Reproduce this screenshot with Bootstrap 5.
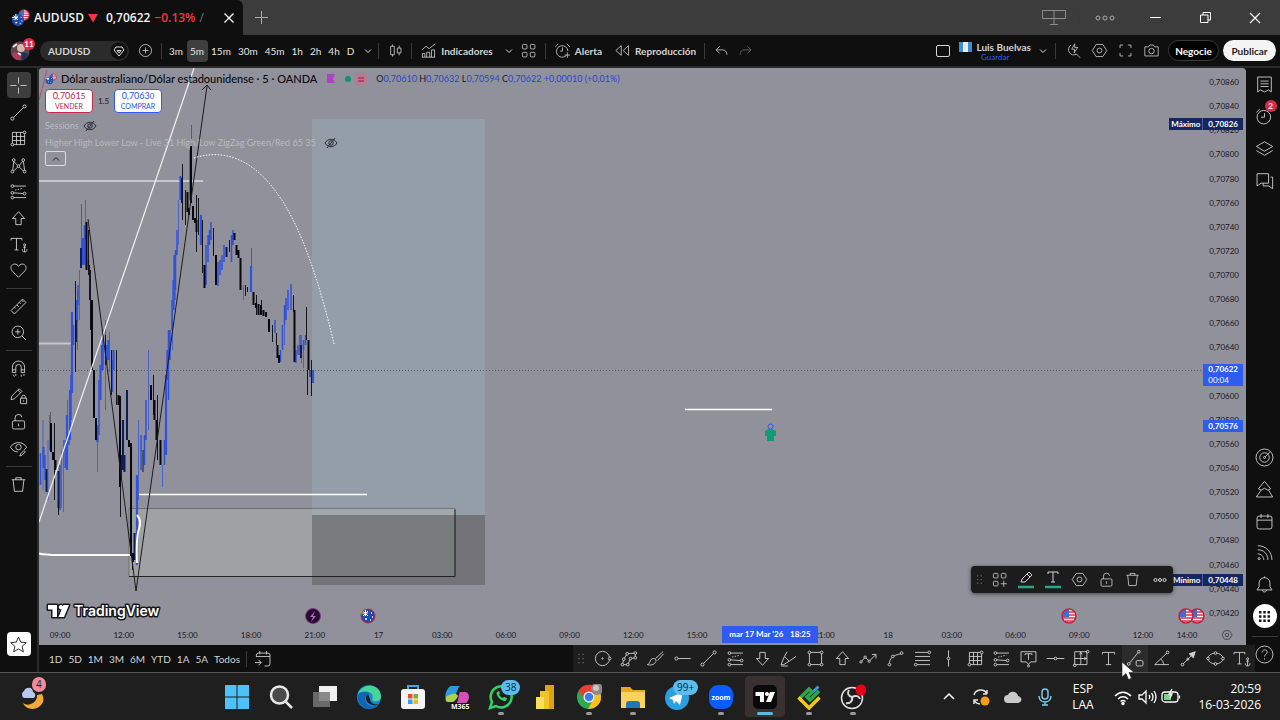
<!DOCTYPE html>
<html lang="es">
<head>
<meta charset="utf-8">
<meta name="viewport" content="width=device-width, initial-scale=1">
<title>AUDUSD</title>
<link href="https://cdn.jsdelivr.net/npm/bootstrap@5.3.0/dist/css/bootstrap.min.css" rel="stylesheet">
<style>
  :root { --ink:#0f0f0f; --line:#3a3a3a; --chart:#91919b; --blue:#2f5bf0; --navy:#16265e; --text:#d4d4d4; }
  body { font-family:Lato,"Open Sans",sans-serif; font-size:10px; line-height:12px; background:var(--ink); color:var(--text); overflow-x:hidden; }
  button { border:0; background:none; color:inherit; padding:0; font:inherit; display:flex; align-items:center; justify-content:center; flex-shrink:0; }
  svg { display:block; flex-shrink:0; }
  .ico { width:19px; height:19px; fill:none; stroke:currentColor; stroke-width:1.3; stroke-linejoin:round; }
  .topbar .ico:not(.chev), .floatbar .ico, .apps .ico { width:17px; height:17px; }
  .ico.chev { width:8px; height:8px; stroke-width:1; }
  .ico.eye { width:14px; height:14px; }
  .vline { width:1px; height:16px; background:var(--line); flex-shrink:0; }
  .hline { height:1px; width:26px; background:var(--line); flex-shrink:0; }

  .titlebar { height:35px; background:#3c3c3c; }
  .tab { width:243px; padding-left:11px; background:var(--ink); border-radius:0 6px 0 0; font-family:"Open Sans",sans-serif; font-size:12px; font-weight:600; color:#f2f2f2; }
  .down { color:#f23645; }
  .wbtn { width:50px; height:35px; }

  .topbar { height:31px; font-weight:700; }
  .avatar { width:24px; }
  .avatar .count { left:15px; top:-3px; }
  .pill { width:89px; height:20px; border-radius:10px; background:#2b2b2b; }
  .tf { height:22px; padding:0 4px 0 3px; border-radius:4px; font-weight:400; color:#e4e4e4; }
  .tf.on { background:#3f3f3f; }
  .w20 { width:20px; } .w26 { width:26px; } .w32 { width:32px; }
  .save { color:#2d5bff; font-size:8px; line-height:8px; font-weight:400; }
  .round-btn { height:21px; border-radius:11px; font-weight:700; }
  .trade { width:51px; background:#000; border:1px solid var(--line); color:#fff; }
  .publish { width:53px; background:#f4f4f4; color:#222; }
  .count { position:absolute; background:#e0294a; color:#fff; border-radius:7px; font-size:8px; line-height:12px; height:12px; min-width:12px; text-align:center; font-weight:700; }

  .work { border-top:2px solid #2b2b2b; }
  .rail { width:37px; padding-top:3px; }
  .rail-r { width:31px; }
  .tool { flex:1 1 0; width:24px; }
  .tool.on { background:#3d3d3d; border-radius:4px; margin:1px 0; }
  .set2 { height:53px; } .set4 { height:107px; } .set8 { height:213px; } .set4r { height:129px; } .set6r { height:190px; }
  .mid { border-left:2px solid #2b2b2b; }
  .fav-star { width:24px; height:24px; background:#fff; color:#111; border-radius:4px; }
  .apps { width:24px; height:24px; border-radius:12px; background:#fff; color:#111; }

  .chart { background:var(--chart); border-radius:3px 4px 0 0; margin-right:3px; color:#17181c; font-size:8px; line-height:12px; }
  .drawing { position:absolute; inset:0; width:100%; height:100%; }
  .legend { color:#17181c; padding-left:6px; }
  .legend-top { height:21px; }
  .sym { font-size:11px; line-height:14px; font-weight:500; color:#08090c; }
  .ohlc { font-size:9px; } .ohlc b { font-weight:400; color:#2947cf; }
  .quote { width:48px; height:24px; border-radius:4px; background:#fff; line-height:10px; font-size:7px; flex-direction:column; }
  .quote span:first-child { font-size:9px; }
  .spread { width:21px; text-align:center; }
  .sell { border:1px solid #c62b4c; color:#c02448; } .buy { border:1px solid #2f5bf0; color:#2b55dc; }
  .ind { color:#b9b9bf; font-size:9px; line-height:17px; }
  .ind svg { color:#2b2b30; }
  .fold { width:21px; height:15px; border:1px solid #dcdce0; border-radius:2px; color:#222; }
  .prices { width:43px; padding:8px 7px 6px 0; text-align:right; }
  .times { height:20px; padding-left:1px; }
  .times span { width:40px; text-align:center; }
  .times button { width:39px; } .times .ico { width:12px; height:12px; }
  .tag { position:absolute; color:#fff; font-weight:700; right:3px; line-height:12px; }
  .tag span { padding:0 5px; } .tag .word { padding:0 2px; } .tag .word + span { border-left:1px solid #4a5aa0; }
  .navy { background:var(--navy); } .vivid { background:var(--blue); }
  .tag-max { top:50px; } .tag-now { top:296px; line-height:11px; } .tag-cross { top:352px; } .tag-min { top:506px; }
  .datetag { position:absolute; left:683px; top:558px; height:17px; width:96px; line-height:17px; background:var(--blue); color:#fff; font-weight:700; border-radius:1px; }
  .floatbar { position:absolute; right:73px; top:498px; width:202px; height:27px; padding-left:2px; background:#1c1c1c; color:#d4d4d4; border-radius:4px; box-shadow:0 1px 4px #0008; }
  .floatbar .ico.grip { width:13px; }
  .floatbar button { flex:1 1 0; }

  .bottom { height:27px; }
  .range { gap:6px; padding-left:10px; }
  .favs { background:#1e1e1e; width:682px; margin-right:-6px; position:relative; z-index:2; }
  .favs .grip { width:16px; }
  .favs button { flex:1 1 0; height:27px; }
  .favs button.on { background:#2b2b2b; }

  .taskbar { height:48px; background:#201f1f; border-top:1px solid #555; font-family:"Open Sans",sans-serif; color:#fff; font-size:12px; line-height:16px; }
  .task { width:44px; height:47px; position:relative; }
  .task svg { width:26px; height:26px; }
  .task.open::after { content:""; position:absolute; bottom:5px; width:6px; height:3px; border-radius:2px; background:#9a9a9a; }
  .task.active::before { content:""; position:absolute; inset:3px 2px; background:#3a3030; border-radius:4px; }
  .task.active::after { width:16px; background:#5ab9ea; }
  .task.active svg { position:relative; }
  .bubble { position:absolute; left:22px; top:7px; background:#5cbdf0; color:#0b2a3a; border-radius:8px; height:15px; line-height:15px; font-size:10px; padding:0 4px; z-index:1; }
  .bubble.wide { left:18px; }
  .bubble.pink { left:32px; top:-6px; background:#f48a9a; }
  .weather { width:67px; margin-right:148px; position:relative; }
  .tray svg { width:20px; height:20px; }
  .lang { width:44px; } .when { width:64px; margin-right:19px; }
  .pointer { position:absolute; left:1121px; top:661px; z-index:5; }
</style>
</head>
<body class="d-flex flex-column min-vh-100">

<svg width="0" height="0" class="position-absolute" aria-hidden="true">
  <defs>
    <symbol id="chev" viewBox="0 0 8 8"><path d="M1 2.500l3 3 3-3"/></symbol>
    <symbol id="chevup" viewBox="0 0 8 8"><path d="M1 5.500l3-3 3 3"/></symbol>
    <symbol id="cross" viewBox="0 0 28 28"><path d="M14 2v9M14 17v9M2 14h9M17 14h9"/></symbol>
    <symbol id="trend" viewBox="0 0 28 28"><circle cx="5" cy="23" r="2.3"/><circle cx="23" cy="5" r="2.3"/><path d="M6.7 21.3L21.3 6.7"/></symbol>
    <symbol id="gann" viewBox="0 0 28 28"><path d="M5 21V5h16M23 7v16H7M5 11h18M5 17h18M11 5v18M17 5v18"/><circle cx="5" cy="23" r="2"/><circle cx="23" cy="5" r="2"/></symbol>
    <symbol id="pattern" viewBox="0 0 28 28"><circle cx="5" cy="23" r="2"/><circle cx="7" cy="6" r="2"/><circle cx="14" cy="15" r="2"/><circle cx="21" cy="6" r="2"/><circle cx="23" cy="23" r="2"/><path d="M5.5 21L7 8l5.500 5.500M15.500 13.500L20 8M21.200 8L23 21M7 22l5.500-5.500M15.500 16.500L21 22"/></symbol>
    <symbol id="forecast" viewBox="0 0 28 28"><circle cx="5" cy="6" r="2"/><circle cx="5" cy="16" r="2"/><circle cx="5" cy="23" r="2"/><circle cx="23" cy="17" r="2"/><path d="M7 6h18M7 16l14 1M7 23h18"/><path d="M9 12l12-3" stroke-dasharray="2 2"/></symbol>
    <symbol id="up" viewBox="0 0 28 28"><path d="M14 4l9 10h-5v9h-8v-9H5z"/></symbol>
    <symbol id="downa" viewBox="0 0 28 28"><path d="M14 24l9-10h-5V5h-8v9H5z"/></symbol>
    <symbol id="tee" viewBox="0 0 28 28"><path d="M5 8V5h18v3M14 5v18M10 23h8"/></symbol>
    <symbol id="teea" viewBox="0 0 28 28"><path d="M3 8V5h16v3M11 5v17M8 22h6M23 16v9M19.500 21c0 3 1.500 4 3.500 4s3.500-1 3.500-4M21 18h4"/><circle cx="23" cy="14.500" r="1.500"/></symbol>
    <symbol id="heart" viewBox="0 0 28 28"><path d="M14 24L4.500 14.500C1 10 3.500 4.500 8.500 4.500c2.500 0 4.500 1.500 5.500 3.500 1-2 3-3.500 5.500-3.500 5 0 7.500 5.500 4 10z"/></symbol>
    <symbol id="ruler" viewBox="0 0 28 28"><path d="M3 20L20 3l5 5L8 25zM8 15l2 2M11.500 11.500l3 3M15 8l2 2M18.500 4.500l3 3"/></symbol>
    <symbol id="zoomin" viewBox="0 0 28 28"><circle cx="13" cy="13" r="8.500"/><path d="M19 19l6 6M13 9v8M9 13h8"/></symbol>
    <symbol id="magnet" viewBox="0 0 28 28"><path d="M5 20v-8a9 9 0 0118 0v8h-5v-8a4 4 0 00-8 0v8zM5 16h5M18 16h5M6 23l2 3M10 22v3M18 23v3M22 22v3"/></symbol>
    <symbol id="penlock" viewBox="0 0 28 28"><path d="M3 20l1-5L15 4l4 4L8 19zM13 6l4 4M17 18h9v8h-9zM19 18v-2a2.500 2.500 0 015 0v2M21.500 21v2"/></symbol>
    <symbol id="lock" viewBox="0 0 28 28"><rect x="5" y="13" width="18" height="12" rx="2"/><path d="M9 13V9a5 5 0 0110-1M14 17v4"/></symbol>
    <symbol id="eyepen" viewBox="0 0 28 28"><path d="M2 12C8 3 20 3 26 12c-1 1.500-2 2.500-3.500 3.500M2 12c3 5 7 7 11 7"/><circle cx="14" cy="12" r="4"/><path d="M16 25l1-3 5-5 2 2-5 5z"/></symbol>
    <symbol id="trash" viewBox="0 0 28 28"><path d="M4 7h20M10 7V4h8v3M6 7l2 17h12l2-17"/></symbol>
    <symbol id="star" viewBox="0 0 28 28"><path d="M14 3l3.300 7.500 8.200.800-6.200 5.400 1.900 8.100L14 20.500l-7.200 4.300 1.900-8.100-6.200-5.400 8.200-.800z"/></symbol>
    <symbol id="hex" viewBox="0 0 28 28"><path d="M8.500 4h11L26 14l-6.500 10h-11L2 14z"/><circle cx="14" cy="14" r="4"/></symbol>
    <symbol id="grid4" viewBox="0 0 28 28"><rect x="4" y="4" width="7.500" height="7.500" rx="1.500"/><rect x="17" y="4" width="7.500" height="7.500" rx="1.500"/><rect x="4" y="17" width="7.500" height="7.500" rx="1.500"/><rect x="17" y="17" width="7.500" height="7.500" rx="1.500"/></symbol>
    <symbol id="gridplus" viewBox="0 0 28 28"><rect x="4" y="4" width="7.500" height="7.500" rx="1.500"/><rect x="17" y="4" width="7.500" height="7.500" rx="1.500"/><rect x="4" y="17" width="7.500" height="7.500" rx="1.500"/><path d="M21 16v10M16 21h10"/></symbol>
    <symbol id="alarm" viewBox="0 0 28 28"><path d="M20 22.500A9.500 9.500 0 1123 15M14 9v6h-4M2 8l5-5M21 3l5 5M22 17v9M17.500 21.500h9"/></symbol>
    <symbol id="clock" viewBox="0 0 28 28"><circle cx="13" cy="15" r="10"/><path d="M14 9v6H9M2 8l5-5"/></symbol>
    <symbol id="rewind" viewBox="0 0 28 28"><path d="M12 6v16L3 14zM24 6v16l-9-8z"/></symbol>
    <symbol id="candles" viewBox="0 0 28 28"><path d="M9 4v3M9 21v3M20 6v4M20 18v4"/><rect x="6" y="7" width="6" height="14"/><rect x="17" y="10" width="6" height="8"/></symbol>
    <symbol id="indic" viewBox="0 0 28 28"><path d="M4 25v-6h4v6M11 25v-8h5v8M19 25V13h5v12M3 25h22M3 13l7-6 5 4 10-8"/></symbol>
    <symbol id="undo" viewBox="0 0 28 28"><path d="M11 7l-6 6 6 6M5 13h11c4 0 7 3 7 8"/></symbol>
    <symbol id="redo" viewBox="0 0 28 28"><path d="M17 7l6 6-6 6M23 13H12c-4 0-7 3-7 8"/></symbol>
    <symbol id="plusc" viewBox="0 0 28 28"><circle cx="14" cy="14" r="10"/><path d="M14 9v10M9 14h10"/></symbol>
    <symbol id="snap" viewBox="0 0 28 28"><path d="M3 8h6l2-3h6l2 3h6v15H3z"/><circle cx="14" cy="15" r="4.500"/></symbol>
    <symbol id="full" viewBox="0 0 28 28"><path d="M5 10V5h5M18 5h5v5M23 18v5h-5M10 23H5v-5"/></symbol>
    <symbol id="quick" viewBox="0 0 28 28"><path d="M19 20A8.500 8.500 0 1110 5M18 19l7 7M16 3l-5 9h5l-1 6 6-9h-5z"/></symbol>
    <symbol id="list" viewBox="0 0 28 28"><path d="M4 3h20v22l-4-3-6 3-6-3-4 3zM8 9h12M8 13h12M8 17h12"/></symbol>
    <symbol id="layers" viewBox="0 0 28 28"><path d="M14 4l12 7-12 7-12-7zM2 17l12 7 12-7"/></symbol>
    <symbol id="chat" viewBox="0 0 28 28"><path d="M3 4h17v14H9l-6 4zM23 9h3v17l-6-4h-8v-4"/></symbol>
    <symbol id="radar" viewBox="0 0 28 28"><circle cx="14" cy="14" r="12.500"/><circle cx="14" cy="14" r="7"/><circle cx="14" cy="14" r="1.500"/><path d="M15 13l7-7"/></symbol>
    <symbol id="tree" viewBox="0 0 28 28"><path d="M14 2l9 11-4 2-5-3-5 3-4-2zM9 15l-7 10h24l-6-10"/></symbol>
    <symbol id="cal" viewBox="0 0 28 28"><rect x="3" y="6" width="22" height="19" rx="3"/><path d="M3 12h22M9 3v6M19 3v6"/></symbol>
    <symbol id="feed" viewBox="0 0 28 28"><path d="M4 4c12 0 21 9 21 21M4 10c9 0 15 6 15 15M4 16c5 0 9 4 9 9"/><circle cx="6" cy="23" r="1.500"/></symbol>
    <symbol id="bell" viewBox="0 0 28 28"><path d="M3 22h22l-3-5v-5c0-5-4-8-8-8s-8 3-8 8v5zM11 22c0 4 6 4 6 0M14 4V2"/></symbol>
    <symbol id="dots9" viewBox="0 0 28 28"><g fill="currentColor" stroke="none"><path d="M5 5h4v4H5zM12 5h4v4h-4zM19 5h4v4h-4zM5 12h4v4H5zM12 12h4v4h-4zM19 12h4v4h-4zM5 19h4v4H5zM12 19h4v4h-4zM19 19h4v4h-4z"/></g></symbol>
    <symbol id="help" viewBox="0 0 28 28"><circle cx="14" cy="14" r="12.500"/><path d="M10.500 11c0-5 7.500-5 7.500-.500 0 3-4 3-4 6.500M14 19.500v2"/></symbol>
    <symbol id="grip" viewBox="0 0 12 28"><g fill="#666" stroke="none"><path d="M2 7h2v2H2zM8 7h2v2H8zM2 13h2v2H2zM8 13h2v2H8zM2 19h2v2H2zM8 19h2v2H8z"/></g></symbol>
    <symbol id="circ" viewBox="0 0 28 28"><circle cx="14" cy="14" r="10.500"/><circle cx="14" cy="14" r="1"/><circle cx="24.500" cy="14" r="2" fill="#1e1e1e"/></symbol>
    <symbol id="poly" viewBox="0 0 28 28"><path d="M5 23l2-8 5-8 12-1v7l-7 1-4 9z"/><g fill="#1e1e1e"><circle cx="5" cy="23" r="2"/><circle cx="7" cy="15" r="2"/><circle cx="12" cy="7" r="2"/><circle cx="24" cy="6" r="2"/><circle cx="24" cy="13" r="2"/><circle cx="17" cy="14" r="2"/><circle cx="13" cy="23" r="2"/></g></symbol>
    <symbol id="brush" viewBox="0 0 28 28"><path d="M2 23c5-1 3-9 9-9 4 0 5 4 2 7s-7 3-11 2zM14 14L25 4M17 17l9-10"/></symbol>
    <symbol id="ray" viewBox="0 0 28 28"><circle cx="5" cy="14" r="2.300"/><path d="M7.300 14H26"/></symbol>
    <symbol id="marker" viewBox="0 0 28 28"><path d="M3 23l5-12 7 7-8 5zM8 11l4-7M15 18l10-7M3 25h10"/></symbol>
    <symbol id="rect" viewBox="0 0 28 28"><path d="M5 5h18v18H5z"/><g fill="#1e1e1e"><circle cx="5" cy="5" r="2"/><circle cx="23" cy="5" r="2"/><circle cx="5" cy="23" r="2"/><circle cx="23" cy="23" r="2"/></g></symbol>
    <symbol id="path" viewBox="0 0 28 28"><path d="M3 19l6-7 6 6L25 8M19 8h6v6"/><g fill="#1e1e1e"><circle cx="3" cy="19" r="1.700"/><circle cx="9" cy="12" r="1.700"/><circle cx="15" cy="18" r="1.700"/></g></symbol>
    <symbol id="arc" viewBox="0 0 28 28"><path d="M5 23c0-9 4-14 18-16"/><g fill="#1e1e1e"><circle cx="5" cy="23" r="2"/><circle cx="10" cy="11" r="2"/><circle cx="23" cy="6" r="2"/></g></symbol>
    <symbol id="fib" viewBox="0 0 28 28"><path d="M3 5h19M3 11h22M3 17h22M6 23h19"/><circle cx="24" cy="5" r="2"/><circle cx="4" cy="23" r="2"/></symbol>
    <symbol id="vert" viewBox="0 0 28 28"><path d="M14 2v10M14 16v10"/><circle cx="14" cy="14" r="2"/></symbol>
    <symbol id="note" viewBox="0 0 28 28"><path d="M3 4h22v15h-8l-3 4-3-4H3zM9 9V7h10v2M14 7v9"/><circle cx="14" cy="25" r="1.500"/></symbol>
    <symbol id="hor" viewBox="0 0 28 28"><path d="M1 14h11M16 14h11"/><circle cx="14" cy="14" r="2"/></symbol>
    <symbol id="price" viewBox="0 0 28 28"><path d="M4 4h18v19H4zM4 14h18M13 4v19M11 8l2-3 2 3M18 12l3 2-3 2"/><circle cx="23" cy="4" r="2"/><circle cx="4" cy="24" r="2"/></symbol>
    <symbol id="trendr" viewBox="0 0 28 28"><circle cx="4" cy="22" r="2"/><circle cx="19" cy="4" r="2"/><path d="M5.500 20.500L17.500 5.500"/><rect x="15" y="17" width="10" height="8" rx="2"/></symbol>
    <symbol id="angle" viewBox="0 0 28 28"><path d="M25 23H4L22 6M13 15c3 2 4 5 4 8"/><circle cx="23" cy="5" r="2"/></symbol>
    <symbol id="arrow" viewBox="0 0 28 28"><path d="M6 22L23 5"/><path d="M24 4l-3 9-6-6z" fill="currentColor"/><circle cx="5" cy="23" r="2"/><circle cx="13" cy="15" r="1.500"/></symbol>
    <symbol id="ell" viewBox="0 0 28 28"><ellipse cx="14" cy="14" rx="11" ry="8"/><g fill="#1e1e1e"><circle cx="3" cy="14" r="2"/><circle cx="25" cy="14" r="2"/><circle cx="14" cy="6" r="2"/><circle cx="14" cy="22" r="2"/></g></symbol>
    <symbol id="goto" viewBox="0 0 28 28"><path d="M5 12V9a3 3 0 013-3h14a3 3 0 013 3v13a3 3 0 01-3 3h-5M5 11h20M10 3v5M20 3v5M3 20h9M8 16l4 4-4 4"/></symbol>
    <symbol id="eyeoff" viewBox="0 0 28 28"><g stroke-width="2"><path d="M2 14C8 4 20 4 26 14 20 24 8 24 2 14zM6 24L22 4"/><circle cx="14" cy="14" r="4.500"/></g></symbol>
    <symbol id="usa" viewBox="0 0 16 16"><circle cx="8" cy="8" r="7" fill="#f3f3f8"/><path d="M8 4h6M8 7h7M2 10h13M4 13h8" stroke="#d8364a" stroke-width="1.500"/><path d="M1 8a7 7 0 017-7v8H1z" fill="#3c6fd0"/><circle cx="8" cy="8" r="7" fill="none" stroke="#c81e3c" stroke-width="1.500"/></symbol>
    <symbol id="aus" viewBox="0 0 16 16"><circle cx="8" cy="8" r="7" fill="#1d4aa8"/><path d="M3 3l5 5M8 3L3 8M5.500 1v7M1 5h7" stroke="#fff" stroke-width="1"/><path d="M5 11h2M11 5h1M12 9h1M10 12h1" stroke="#fff" stroke-width="1.500"/></symbol>
  </defs>
</svg>

<header class="titlebar d-flex">
  <div class="tab d-flex align-items-center">
    <svg width="19" height="20" viewBox="0 0 19 20"><use href="#usa" x="7" y="1" width="12" height="12"/><use href="#aus" x="0" y="5" width="14" height="14"/></svg>
    <span class="ms-1">AUDUSD</span>
    <svg width="10" height="10" viewBox="0 0 10 10" class="ms-1 me-2"><path d="M0 1h10L5 9.500z" fill="#f23645"/></svg>
    <span>0,70622</span><span class="down ms-1">−0.13%</span><span class="ms-1 fw-normal text-secondary">/</span>
    <button class="ms-auto me-2" aria-label="Cerrar pestaña"><svg width="12" height="12" viewBox="0 0 12 12" stroke="#fff" stroke-width="1.300"><path d="M1.500 1.500l9 9M10.500 1.500l-9 9"/></svg></button>
  </div>
  <button class="ms-2 ps-1" aria-label="Nueva pestaña"><svg width="13" height="13" viewBox="0 0 13 13" stroke="#aaa"><path d="M6.500 0v13M0 6.500h13"/></svg></button>
  <div class="ms-auto d-flex align-items-center">
    <button class="wbtn" aria-label="Pantallas"><svg width="24" height="18" viewBox="0 0 24 18" fill="none" stroke="#8c8c8c"><path d="M.5 1.500h23v8H.500zM12 1.500v14M8 15.500h8"/></svg></button>
    <span class="vline"></span>
    <button class="wbtn" aria-label="Más"><svg width="20" height="8" viewBox="0 0 20 8" fill="none" stroke="#aaa"><circle cx="3" cy="4" r="2"/><circle cx="10" cy="4" r="2"/><circle cx="17" cy="4" r="2"/></svg></button>
    <button class="wbtn" aria-label="Minimizar"><svg width="11" height="11" viewBox="0 0 11 11" stroke="#fff"><path d="M0 5.500h11"/></svg></button>
    <button class="wbtn" aria-label="Restaurar"><svg width="11" height="11" viewBox="0 0 11 11" fill="none" stroke="#fff"><path d="M.5 3h7.500v7.500H.500zM3 3V.500h7.500V8H8"/></svg></button>
    <button class="wbtn" aria-label="Cerrar"><svg width="12" height="12" viewBox="0 0 12 12" stroke="#fff" stroke-width="1.200"><path d="M1 1l10 10M11 1L1 11"/></svg></button>
  </div>
</header>

<nav class="topbar d-flex align-items-center" aria-label="Barra superior">
  <button class="avatar position-relative ms-2" aria-label="Perfil">
    <svg width="20" height="20" viewBox="0 0 20 20"><circle cx="10" cy="10" r="9.500" fill="#5c4650"/><circle cx="11" cy="7" r="4" fill="#d9b7ab"/><path d="M2 13c4-4 8-1 9 5-4 2-8 0-9-5z" fill="#b23b5a"/><path d="M11 12c4-1 7 0 7 2-1 3-4 5-6 5z" fill="#24305c"/><path d="M3 6l4-3M8 12l3 2" stroke="#e9e4ec" stroke-width="2"/></svg>
    <span class="count">11</span>
  </button>
  <button class="pill ms-2 justify-content-between ps-2"><span>AUDUSD</span>
    <svg width="20" height="20" viewBox="0 0 20 20" fill="none" stroke="#ddd"><circle cx="10" cy="10" r="8.500" fill="#0f0f0f" stroke="none"/><path d="M7 6h6l2 3-5 6-5-6zM8 9.500h4l-2 2.500z"/></svg></button>
  <button class="w32" aria-label="Añadir símbolo"><svg class="ico"><use href="#plusc"/></svg></button>
  <span class="vline me-1"></span>
  <button class="tf">3m</button><button class="tf on">5m</button><button class="tf">15m</button><button class="tf">30m</button><button class="tf">45m</button><button class="tf">1h</button><button class="tf">2h</button><button class="tf">4h</button><button class="tf">D</button>
  <button class="w20" aria-label="Más intervalos"><svg class="ico chev"><use href="#chev"/></svg></button>
  <span class="vline"></span>
  <button class="w32" aria-label="Velas"><svg class="ico"><use href="#candles"/></svg></button>
  <span class="vline me-2"></span>
  <button><svg class="ico me-1"><use href="#indic"/></svg>Indicadores</button>
  <button class="ms-2 ps-1" aria-label="Favoritos"><svg class="ico chev"><use href="#chev"/></svg></button>
  <button class="w32" aria-label="Plantillas"><svg class="ico"><use href="#grid4"/></svg></button>
  <span class="vline me-2"></span>
  <button><svg class="ico me-1"><use href="#alarm"/></svg>Alerta</button>
  <button class="ms-2 ps-1"><svg class="ico me-1"><use href="#rewind"/></svg>Reproducción</button>
  <span class="vline ms-2"></span>
  <button class="w32" aria-label="Deshacer"><svg class="ico"><use href="#undo"/></svg></button>
  <button class="opacity-50" aria-label="Rehacer"><svg class="ico"><use href="#redo"/></svg></button>

  <div class="ms-auto d-flex align-items-center">
    <button aria-label="Disposición" class="me-2"><svg width="16" height="16" viewBox="0 0 16 16" fill="none" stroke="#d4d4d4"><rect x="1.500" y="2.500" width="13" height="11" rx="1.500"/></svg></button>
    <button class="flex-column"><span class="d-flex align-items-center"><svg width="13" height="10" viewBox="0 0 13 10" class="me-1"><path d="M0 0h13v10H0z" fill="#3d8ed8"/><path d="M4 0h5v10H4z" fill="#e9efe0"/></svg>Luis Buelvas</span><span class="save">Guardar</span></button>
    <button class="px-2" aria-label="Más diseños"><svg class="ico chev"><use href="#chev"/></svg></button>
    <span class="vline me-1"></span>
    <button class="w26" aria-label="Búsqueda rápida"><svg class="ico"><use href="#quick"/></svg></button>
    <button class="w26" aria-label="Configuración"><svg class="ico"><use href="#hex"/></svg></button>
    <button class="w26" aria-label="Pantalla completa"><svg class="ico"><use href="#full"/></svg></button>
    <button class="w26" aria-label="Captura"><svg class="ico"><use href="#snap"/></svg></button>
    <button class="round-btn trade ms-1">Negocie</button>
    <button class="round-btn publish ms-1 me-1">Publicar</button>
  </div>
</nav>

<main class="work d-flex flex-grow-1">
  <aside class="rail d-flex flex-column align-items-center" aria-label="Herramientas de dibujo">
    <div class="set8 d-flex flex-column">
      <button class="tool on" aria-label="Cruz"><svg class="ico"><use href="#cross"/></svg></button>
      <button class="tool" aria-label="Línea"><svg class="ico"><use href="#trend"/></svg></button>
      <button class="tool" aria-label="Gann"><svg class="ico"><use href="#gann"/></svg></button>
      <button class="tool" aria-label="Patrones"><svg class="ico"><use href="#pattern"/></svg></button>
      <button class="tool" aria-label="Pronóstico"><svg class="ico"><use href="#forecast"/></svg></button>
      <button class="tool" aria-label="Flecha"><svg class="ico"><use href="#up"/></svg></button>
      <button class="tool" aria-label="Texto"><svg class="ico"><use href="#teea"/></svg></button>
      <button class="tool" aria-label="Iconos"><svg class="ico"><use href="#heart"/></svg></button>
    </div>
    <span class="hline my-1"></span>
    <div class="set2 d-flex flex-column">
      <button class="tool" aria-label="Medir"><svg class="ico"><use href="#ruler"/></svg></button>
      <button class="tool" aria-label="Acercar"><svg class="ico"><use href="#zoomin"/></svg></button>
    </div>
    <span class="hline my-1"></span>
    <div class="set4 d-flex flex-column">
      <button class="tool" aria-label="Imán"><svg class="ico"><use href="#magnet"/></svg></button>
      <button class="tool" aria-label="Modo dibujo"><svg class="ico"><use href="#penlock"/></svg></button>
      <button class="tool" aria-label="Bloquear"><svg class="ico"><use href="#lock"/></svg></button>
      <button class="tool" aria-label="Ocultar"><svg class="ico"><use href="#eyepen"/></svg></button>
    </div>
    <span class="hline my-1"></span>
    <button class="my-1" aria-label="Eliminar"><svg class="ico"><use href="#trash"/></svg></button>
    <button class="fav-star mt-auto mb-3" aria-label="Favoritos"><svg class="ico"><use href="#star"/></svg></button>
  </aside>

  <section class="mid d-flex flex-column flex-grow-1">
    <div class="chart d-flex flex-column flex-grow-1 position-relative overflow-hidden">
      <svg class="drawing" aria-label="Gráfico de velas">
        <g transform="translate(-39 -68)" fill="none">
          <path d="M312 119h173v396H312z" fill="#9cb8c0" fill-opacity=".35"/>
          <path d="M129 509h326v67H129z" fill="#b4b8b0" fill-opacity=".4"/>
          <path d="M312 515h173v70H312z" fill="#58585a" fill-opacity=".52"/>
          <path d="M129 508.500h326v68H129z" stroke="#1d1d20" stroke-opacity=".3"/>
          <path d="M129 576.500h326v-67" stroke="#222"/>
          <path d="M39 370.500h1165" stroke="#55606c" stroke-dasharray="1 2"/>
          <path d="M39 181h164M39 343.500h33" stroke="#c6c6cc" stroke-width="2"/>
          <path d="M137 494.500h230M685 409.500h87" stroke="#fff" stroke-width="1.300"/>
          <path d="M39 553.500q6 1.500 20 1.500h71" stroke="#fff" stroke-width="2"/>
          <path d="M39 100L47 70" stroke="#b83850" stroke-opacity=".7"/>
          <path d="M43 420v70M48 440v60M49.500 415v35M61.500 450v58M63.500 440v72M67.500 400v40M77.500 290v60M79.500 270v50M85.500 200v40M97.500 440v32M105.500 320v90M109.500 332v40M138.500 420v80M148.500 350v80M162.500 465v22M172.500 310v40M178.500 200v45M243.500 285v15M284.500 305v40M301.500 335v28M303.500 340v28" stroke="#4d62c6"/>
          <path d="M50.500 412v20M81.500 204v46M191.500 125v22M251.500 248v30" stroke="#5c5c66"/>
          <path d="M40.500 453v32M45 455v25M60 465v45M69 433v12M71 375v45M73.500 325v20M78 285v20M84.500 225v40M88.500 260v10M99 380v55M103 330v40M112.500 360v32M141 435v35M144.500 435v30M146 400v40M164.500 440v25M168.500 330v70M170 330v30M172 300v30M175.500 250v40M177 230v25M190 150v50M206 245v40M208 235v27M209.500 230v15M211 222v18M218 262v24M220 260v15M222 255v15M224 245v17M231.500 235v27M233 230v15M275 320v13M280.500 350v12M282.500 325v25M284.500 305v20M286 298v22M288 290v20M291 284v26M296 350v13M298 345v10M300 335v20M303.500 340v10M305.500 335v10" stroke="#3050d8" stroke-width="1.500"/>
          <path d="M43.500 447v21M65.500 440v28M67 415v55M70 390v50M72 312v81M77 300v22M83 238v27M97.500 425v17M100.500 365v35M102 345v25M106.500 345v20M108.500 340v20M113.500 350v20M137 475v90M166 375v80M167.500 350v30M173.500 280v30M174.500 255v45M180.500 176v24M201 215v30M251 266v26M313 370v13" stroke="#2f52e0" stroke-width="2.200"/>
          <path d="M46.500 469v23M58.500 471v37M76 320v22M81 248v20M121 455v25M124.500 455v17M127 390v50M134.500 533v27M182 178v25M226.500 247v10M301 345v13M123 420v50" stroke="#0e1c58" stroke-width="2"/>
          <path d="M54.500 423v77M58.500 500v15M75.500 281v91M88.500 230v45M89.500 265v35M90.500 270v60M105.500 335v30M111.500 350v45M116.500 350v55M120.500 480v37M132.500 556v14M143 450v22M153.500 375v40M157.500 395v65M182.500 164v56M185.500 190v35M196.500 195v57M198.500 198v37M202.500 220v53M213.500 228v28M229.500 240v12M245.500 285v11M247.500 287v5M261.500 300v15M272.500 325v17M276.500 333v12M256.500 295v20M293.500 295v17M306.500 307v33M307.500 370v25M311.500 360v36M310 370v7" stroke="#14161e"/>
          <path d="M51 423v29M53 452v8M55.500 460v10M86.500 222v48M92 300v70M94 370v48M96 418v22M118.500 395v10M120 396v91M129 440v7M131 443v113M133 553v9M151 385v15M154.500 400v20M156.500 420v20M160.500 440v25M187.500 192v20M189 208v7M191 146v57M193 206v14M195 218v5M196.500 220v12M204.500 265v23M216 255v30M234.500 233v7M236.500 245v10M238.500 250v8M240.500 258v32M253.500 292v13M256 303v5M258.500 304v11M261 305v10M263.500 310v6M266 312v5M269 319v13M277.500 345v13M279 355v8M294.500 310v52M308.500 340v30" stroke="#07080f" stroke-width="2"/>
          <path d="M137 515q5 6 2 14t-2 34" stroke="#fff" stroke-width="2"/>
          <path d="M39 522L194 68" stroke="#f2f2f4" stroke-width="1.200"/>
          <path d="M88 219L136 591 207 86M202 90l5-5 4 5" stroke="#1c1c1e"/>
          <path d="M194 158C235 145 270 170 297 228 314 265 326 310 334 344" stroke="#fff" stroke-dasharray="1.500 1.500"/>
          <circle cx="770.500" cy="426.500" r="2.500" stroke="#2f5bf0"/>
          <path d="M765 431q5-4 11 0v5h-2v5h-7v-5h-2z" fill="#119a78"/>
          <circle cx="313" cy="616" r="7.500" fill="#25102c" stroke="#7c3592"/><path d="M315 611l-5 6h3l-2 5 5-6h-3z" fill="#c05cdc"/>
          <use href="#aus" x="360" y="608" width="16" height="16"/><circle cx="368" cy="616" r="7" stroke="#c81e3c"/>
          <use href="#usa" x="1061" y="608" width="16" height="16"/><use href="#usa" x="1189" y="608" width="16" height="16"/><use href="#usa" x="1178" y="608" width="16" height="16"/>
          <g fill="#fff" stroke="#17181c" stroke-width="3" paint-order="stroke" stroke-linejoin="round">
            <path d="M48 605h9v12h-4.500v-7.500H48zM63.500 605h5.500l-5 12h-5.500zM61 605a2.200 2.200 0 11-.1 0z"/>
            <text x="74" y="616" font-family="Inter,sans-serif" font-size="14" font-weight="600">TradingView</text>
          </g>
        </g>
      </svg>

      <div class="d-flex flex-grow-1 position-relative">
        <div class="legend flex-grow-1">
          <div class="legend-top d-flex align-items-center">
            <svg width="12" height="14" viewBox="0 0 19 20" class="me-1"><use href="#usa" x="7" y="1" width="12" height="12"/><use href="#aus" x="0" y="5" width="14" height="14"/></svg>
            <span class="sym">Dólar australiano/Dólar estadounidense · 5 · OANDA</span>
            <svg width="43" height="12" viewBox="0 0 43 12" class="mx-2"><path d="M2 1h8l-2 5 2 4H2z" fill="#b040c8"/><circle cx="23" cy="6" r="3" fill="#12936f"/><rect x="30" width="12" height="12" rx="3" fill="#b77b92"/><path d="M33 5h6M33 8h6" stroke="#a01040"/></svg>
            <span class="ohlc">O<b>0,70610</b> H<b>0,70632</b> L<b>0,70594</b> C<b>0,70622 +0,00010 (+0,01%)</b></span>
          </div>
          <div class="d-flex align-items-center">
            <button class="quote sell"><span>0,7061<small>5</small></span><span>VENDER</span></button>
            <span class="spread">1.5</span>
            <button class="quote buy"><span>0,7063<small>0</small></span><span>COMPRAR</span></button>
          </div>
          <div class="ind d-flex align-items-center mt-1"><span>Sessions</span><svg class="ico eye ms-1"><use href="#eyeoff"/></svg></div>
          <div class="ind d-flex align-items-center"><span>Higher High Lower Low - Live 31 High/Low ZigZag Green/Red 65 35</span><svg class="ico eye ms-2"><use href="#eyeoff"/></svg></div>
          <button class="fold" aria-label="Contraer leyenda"><svg class="ico chev"><use href="#chevup"/></svg></button>
        </div>
        <div class="prices d-flex flex-column justify-content-between">
          <span>0,70860</span><span>0,70840</span><span>0,70820</span><span>0,70800</span><span>0,70780</span><span>0,70760</span><span>0,70740</span><span>0,70720</span><span>0,70700</span><span>0,70680</span><span>0,70660</span><span>0,70640</span><span>&nbsp;</span><span>0,70600</span><span>0,70580</span><span>0,70560</span><span>0,70540</span><span>0,70520</span><span>0,70500</span><span>0,70480</span><span>0,70460</span><span>0,70440</span><span>0,70420</span>
        </div>
      </div>
      <div class="times d-flex align-items-center position-relative">
        <div class="d-flex justify-content-between flex-grow-1">
          <span>09:00</span><span>12:00</span><span>15:00</span><span>18:00</span><span>21:00</span><span>17</span><span>03:00</span><span>06:00</span><span>09:00</span><span>12:00</span><span>15:00</span><span>&nbsp;</span><span>21:00</span><span>18</span><span>03:00</span><span>06:00</span><span>09:00</span><span>12:00</span>
        </div>
        <span class="ms-1">14:00</span>
        <button aria-label="Ajustes de escala"><svg class="ico"><use href="#hex"/></svg></button>
      </div>

      <div class="tag navy tag-max d-flex"><span class="word">Máximo</span><span>0,70826</span></div>
      <div class="tag vivid tag-now"><span class="d-block">0,70622</span><span class="d-block fw-normal">00:04</span></div>
      <div class="tag vivid tag-cross d-flex"><span>0,70576</span></div>
      <div class="tag navy tag-min d-flex"><span class="word">Mínimo</span><span>0,70448</span></div>
      <div class="datetag d-flex justify-content-around px-1"><span>mar 17 Mar '26</span><span>18:25</span></div>
      <div class="floatbar d-flex align-items-center" role="toolbar" aria-label="Opciones del dibujo">
        <svg class="ico grip"><use href="#grip"/></svg>
        <button aria-label="Plantillas"><svg class="ico"><use href="#gridplus"/></svg></button>
        <button aria-label="Color"><svg width="16" height="19" viewBox="0 0 16 19" fill="none" stroke="currentColor"><path d="M3 12l1-3 7-7 3 3-7 7zM9 4l3 3"/><path d="M0 17h16" stroke="#22a884" stroke-width="2.500"/></svg></button>
        <button aria-label="Color de texto"><svg width="16" height="19" viewBox="0 0 16 19" fill="none" stroke="currentColor"><path d="M3 4V2h10v2M8 2v10M6 12h4"/><path d="M0 17h16" stroke="#22a884" stroke-width="2.500"/></svg></button>
        <button aria-label="Configuración"><svg class="ico"><use href="#hex"/></svg></button>
        <button aria-label="Bloquear"><svg class="ico"><use href="#lock"/></svg></button>
        <button aria-label="Eliminar"><svg class="ico"><use href="#trash"/></svg></button>
        <button aria-label="Más"><svg width="14" height="6" viewBox="0 0 14 6" fill="none" stroke="#ddd"><circle cx="2.500" cy="3" r="1.500"/><circle cx="7" cy="3" r="1.500"/><circle cx="11.500" cy="3" r="1.500"/></svg></button>
      </div>
    </div>

    <div class="bottom d-flex align-items-center justify-content-between">
      <div class="range d-flex align-items-center">
        <button>1D</button><button>5D</button><button>1M</button><button>3M</button><button>6M</button><button>YTD</button><button>1A</button><button>5A</button><button>Todos</button>
        <span class="vline"></span>
        <button aria-label="Ir a fecha"><svg class="ico"><use href="#goto"/></svg></button>
      </div>
      <div class="favs d-flex align-items-center" role="toolbar" aria-label="Dibujos favoritos">
        <svg class="ico grip"><use href="#grip"/></svg>
        <button aria-label="Círculo"><svg class="ico"><use href="#circ"/></svg></button>
        <button aria-label="Polilínea"><svg class="ico"><use href="#poly"/></svg></button>
        <button aria-label="Pincel"><svg class="ico"><use href="#brush"/></svg></button>
        <button aria-label="Rayo"><svg class="ico"><use href="#ray"/></svg></button>
        <button aria-label="Tendencia"><svg class="ico"><use href="#trend"/></svg></button>
        <button aria-label="Posición"><svg class="ico"><use href="#forecast"/></svg></button>
        <button aria-label="Flecha abajo"><svg class="ico"><use href="#downa"/></svg></button>
        <button aria-label="Marcador"><svg class="ico"><use href="#marker"/></svg></button>
        <button aria-label="Rectángulo"><svg class="ico"><use href="#rect"/></svg></button>
        <button aria-label="Flecha arriba"><svg class="ico"><use href="#up"/></svg></button>
        <button aria-label="Trayectoria"><svg class="ico"><use href="#path"/></svg></button>
        <button aria-label="Curva"><svg class="ico"><use href="#arc"/></svg></button>
        <button aria-label="Fibonacci"><svg class="ico"><use href="#fib"/></svg></button>
        <button aria-label="Vertical"><svg class="ico"><use href="#vert"/></svg></button>
        <button aria-label="Gann"><svg class="ico"><use href="#gann"/></svg></button>
        <button aria-label="Posición corta"><svg class="ico"><use href="#forecast"/></svg></button>
        <button aria-label="Nota"><svg class="ico"><use href="#note"/></svg></button>
        <button aria-label="Horizontal"><svg class="ico"><use href="#hor"/></svg></button>
        <button aria-label="Rango"><svg class="ico"><use href="#price"/></svg></button>
        <button aria-label="Texto"><svg class="ico"><use href="#tee"/></svg></button>
        <button class="on" aria-label="Línea de información"><svg class="ico"><use href="#trendr"/></svg></button>
        <button aria-label="Ángulo"><svg class="ico"><use href="#angle"/></svg></button>
        <button aria-label="Flecha"><svg class="ico"><use href="#arrow"/></svg></button>
        <button aria-label="Elipse"><svg class="ico"><use href="#ell"/></svg></button>
        <button aria-label="Texto anclado"><svg class="ico"><use href="#teea"/></svg></button>
      </div>
    </div>
  </section>

  <aside class="rail-r d-flex flex-column align-items-center" aria-label="Paneles">
    <div class="set4r d-flex flex-column">
      <button class="tool" aria-label="Lista"><svg class="ico"><use href="#list"/></svg></button>
      <button class="tool position-relative" aria-label="Alertas"><svg class="ico"><use href="#clock"/></svg><span class="count top-0 end-0">2</span></button>
      <button class="tool" aria-label="Capas"><svg class="ico"><use href="#layers"/></svg></button>
      <button class="tool" aria-label="Chat"><svg class="ico"><use href="#chat"/></svg></button>
    </div>
    <div class="set6r d-flex flex-column mt-auto">
      <button class="tool" aria-label="Screener"><svg class="ico"><use href="#radar"/></svg></button>
      <button class="tool" aria-label="Pine"><svg class="ico"><use href="#tree"/></svg></button>
      <button class="tool" aria-label="Calendario"><svg class="ico"><use href="#cal"/></svg></button>
      <button class="tool" aria-label="Noticias"><svg class="ico"><use href="#feed"/></svg></button>
      <button class="tool" aria-label="Notificaciones"><svg class="ico"><use href="#bell"/></svg></button>
      <button class="tool" aria-label="Aplicaciones"><span class="apps d-flex align-items-center justify-content-center"><svg class="ico"><use href="#dots9"/></svg></span></button>
    </div>
    <span class="hline my-1"></span>
    <button class="mb-1 py-1" aria-label="Ayuda"><svg class="ico"><use href="#help"/></svg></button>
  </aside>
</main>

<footer class="taskbar d-flex align-items-center">
  <button class="weather" aria-label="Tiempo"><svg width="28" height="28" viewBox="0 0 28 28"><path d="M17 12a9 9 0 01-14 8c3 8 16 8 20-1 1-3 0-6-1-8z" fill="#f5a93a"/><path d="M4 15a4 4 0 010-7c2-5 9-4 9 1 3 1 3 6 0 6z" fill="#b7c7ee"/></svg><span class="bubble pink">4</span></button>
  <button class="task" aria-label="Inicio"><svg viewBox="0 0 26 26" fill="#4cc2f8"><path d="M1 1h11.500v11.500H1zM13.500 1H25v11.500H13.500zM1 13.500h11.500V25H1zM13.500 13.500H25V25H13.500z"/></svg></button>
  <button class="task" aria-label="Buscar"><svg viewBox="0 0 26 26" fill="#4a4a4a" stroke="#e8e8e8" stroke-width="2.500"><path d="M17 17l7 7"/><circle cx="11.500" cy="11" r="8.500"/></svg></button>
  <button class="task" aria-label="Vista de tareas"><svg viewBox="0 0 26 26"><path d="M7 2h18v15H7z" fill="#f0f0f0"/><path d="M1 8h17v15H1z" fill="#777" fill-opacity=".85"/></svg></button>
  <button class="task" aria-label="Edge"><svg viewBox="0 0 26 26"><circle cx="13" cy="13" r="12" fill="#1687d6"/><path d="M2 10C6-2 25-1 25 13c0 4-6 6-9 3 4-8-8-11-14-6z" fill="#45d49a"/><path d="M1.500 13c1-5 8-7 12-3-6 1-6 9 1 12 3 1 6 0 8-1-6 7-20 4-21-8z" fill="#1264b4"/><path d="M12 10c-4 4-2 9 4 11 3 1 5 0 7-1-5 1-9-1-9-5z" fill="#202020"/></svg></button>
  <button class="task" aria-label="Store"><svg viewBox="0 0 26 26"><path d="M8 6V2h10v4" fill="none" stroke="#4ba3dc" stroke-width="2"/><rect x="1" y="5" width="24" height="20" rx="3" fill="#f4f4f4"/><path d="M8 10h4.500v4.500H8z" fill="#e34f2e"/><path d="M13.500 10H18v4.500h-4.500z" fill="#74b62c"/><path d="M8 15.500h4.500V20H8z" fill="#2d9fe4"/><path d="M13.500 15.500H18V20h-4.500z" fill="#f5b81c"/></svg></button>
  <button class="task" aria-label="M365"><svg viewBox="0 0 26 26"><path d="M7 2h9c-3 2-4 12-8 14H3C-1 14 3 3 7 2z" fill="#2e9bd8"/><path d="M3 12c4-2 9-4 11 0-2 4-4 6-6 6H4c-3 0-3-4-1-6z" fill="#a8d451"/><path d="M16 8h6c5 2 3 10-1 12h-9c3-3 2-10 4-12z" fill="#d64fb8"/><path d="M7 19h19v7H7z" fill="#111"/><text x="7" y="25" font-size="7" font-weight="700" fill="#fff">M365</text></svg></button>
  <button class="task open" aria-label="WhatsApp"><svg viewBox="0 0 26 26" fill="none" stroke="#2fd368" stroke-width="2.500"><path d="M2 24l2-6A10.500 10.500 0 118 22z"/><path d="M9 8c-2 3 4 10 9 9l1-3-3-1-2 1-3-3 1-2-1-2z" fill="#2fd368" stroke="none"/></svg><span class="bubble">38</span></button>
  <button class="task" aria-label="Power BI"><svg viewBox="0 0 26 26"><path d="M13 1h9v24h-9z" fill="#d9a514"/><path d="M8 7h9v18H8z" fill="#f0c22c"/><path d="M4 13h8v12H4z" fill="#f9dc62"/></svg></button>
  <button class="task open" aria-label="Chrome"><svg viewBox="0 0 26 26"><circle cx="13" cy="13" r="12" fill="#2da94f"/><path d="M2.600 7A12 12 0 0124.500 9H13a5 5 0 00-4.500 6z" fill="#e5402f"/><path d="M25 13a12 12 0 01-13 12l5-9a5 5 0 000-7h7.500z" fill="#fbc116"/><circle cx="13" cy="13" r="5.500" fill="#fff"/><circle cx="13" cy="13" r="4.300" fill="#3b7ded"/><circle cx="21" cy="5" r="6" fill="#8d8790"/><circle cx="20" cy="4" r="3" fill="#d6c4bb"/></svg></button>
  <button class="task open" aria-label="Explorador"><svg viewBox="0 0 26 26"><path d="M1 3h9l3 3h12v18H1z" fill="#e8a91c"/><path d="M1 8h24v16H1z" fill="#fcd45c"/><path d="M6 24v-4a3 3 0 013-3h8a3 3 0 013 3v4z" fill="#1e78b8"/></svg></button>
  <button class="task" aria-label="Telegram"><svg viewBox="0 0 26 26"><circle cx="13" cy="14" r="12" fill="#2c9fe0"/><path d="M5 14l14-6-3 13-4-4-2 3-1-4z" fill="#fff"/></svg><span class="bubble wide">99+</span></button>
  <button class="task open" aria-label="Zoom"><svg viewBox="0 0 26 26"><rect x="1" y="1" width="24" height="24" rx="9" fill="#0b5cff"/><text x="13" y="15.500" text-anchor="middle" font-size="7" font-weight="700" fill="#fff">zoom</text></svg></button>
  <button class="task open active" aria-label="TradingView"><svg viewBox="0 0 26 26"><rect x="1" y="1" width="24" height="24" rx="5" fill="#0a0a0a"/><path d="M3.500 8H12v10H8v-6H3.500zM18 8h5l-4 10h-5zM15 8a2 2 0 11-.1 0z" fill="#fff"/></svg></button>
  <button class="task open" aria-label="LiteFinance"><svg viewBox="0 0 26 26" fill="none" stroke-width="3.500"><path d="M3.500 14.500L13 5l3 3-5 5 3 3 9-9" stroke="#27a84a"/><path d="M2.500 13.500L13 24l10.500-10.500" stroke="#f3c818"/><path d="M17.500 7.500l5-5" stroke="#3a9be0" stroke-width="3"/></svg></button>
  <button class="task open" aria-label="OBS"><svg viewBox="0 0 26 26"><circle cx="12" cy="14" r="10.500" fill="#1c1c1e" stroke="#e4e4e4" stroke-width="1.500"/><path d="M12 13c-4-1-5-4-3-7M12 13c4-2 7-1 8 2M12 13c1 4-2 7-6 6" fill="none" stroke="#d8d8d8" stroke-width="2"/><circle cx="21" cy="6" r="5.500" fill="#e60012"/></svg></button>
  <div class="tray d-flex align-items-center ms-auto">
    <button class="w32" aria-label="Iconos ocultos"><svg viewBox="0 0 20 20" fill="none" stroke="#fff" stroke-width="1.500"><path d="M5 12l5-5 5 5"/></svg></button>
    <button class="w32" aria-label="Sincronización"><svg viewBox="0 0 20 20" fill="none" stroke="#e4e4e4" stroke-width="1.500"><path d="M3 8a7 7 0 0113-1V3M16 7h-4M3 17v-4h4M3 13a7 7 0 006 4"/><circle cx="14" cy="14" r="4.500" fill="#f59c1e" stroke="none"/></svg></button>
    <button class="w32" aria-label="Nube"><svg viewBox="0 0 20 20"><path d="M5 16a4 4 0 010-8c2-5 9-4 10 1 5 1 4 7 0 7z" fill="#c9c9c9"/></svg></button>
    <button class="w32" aria-label="Micrófono"><svg viewBox="0 0 20 20" fill="none" stroke="#7cc8ea" stroke-width="1.500"><rect x="7" y="2" width="6" height="10" rx="3"/><path d="M4 9c0 8 12 8 12 0M10 15v3M7 18h6"/></svg></button>
    <button class="lang flex-column"><span>ESP</span><span>LAA</span></button>
    <button class="d-flex gap-1 ms-2" aria-label="Red, sonido y batería">
      <svg viewBox="0 0 20 20" fill="none" stroke="#fff" stroke-width="1.500"><path d="M2 9c5-5 11-5 16 0M5 12c3-3 7-3 10 0M7.500 14.500c2-1.500 3-1.500 5 0"/><circle cx="10" cy="16.500" r="1" fill="#fff"/></svg>
      <svg viewBox="0 0 20 20" fill="none" stroke="#fff" stroke-width="1.300"><path d="M2 8h3l4-4v12l-4-4H2zM12 8q1.500 2 0 4M14.500 6q3 4 0 8M17 4q4 6 0 12"/></svg>
      <svg viewBox="0 0 20 20" fill="none" stroke="#fff" stroke-width="1.300"><rect x="1" y="5" width="16" height="10" rx="3"/><path d="M3 7h7v6H3z" fill="#7fd08a" stroke="none"/><path d="M18.500 8.500v3M11 2l-3 5h3l-2 4"/></svg>
    </button>
    <button class="when flex-column align-items-end ms-3 text-end"><span>20:59</span><span>16-03-2026</span></button>
  </div>
</footer>

<svg class="pointer" width="14" height="20" viewBox="0 0 14 20" aria-hidden="true"><path d="M1 1v15l4-3.500 2.500 6 3-1.300-2.500-5.700h5z" fill="#fff" stroke="#222" stroke-width=".6"/></svg>

<script src="https://cdn.jsdelivr.net/npm/bootstrap@5.3.0/dist/js/bootstrap.bundle.min.js"></script>
</body>
</html>
